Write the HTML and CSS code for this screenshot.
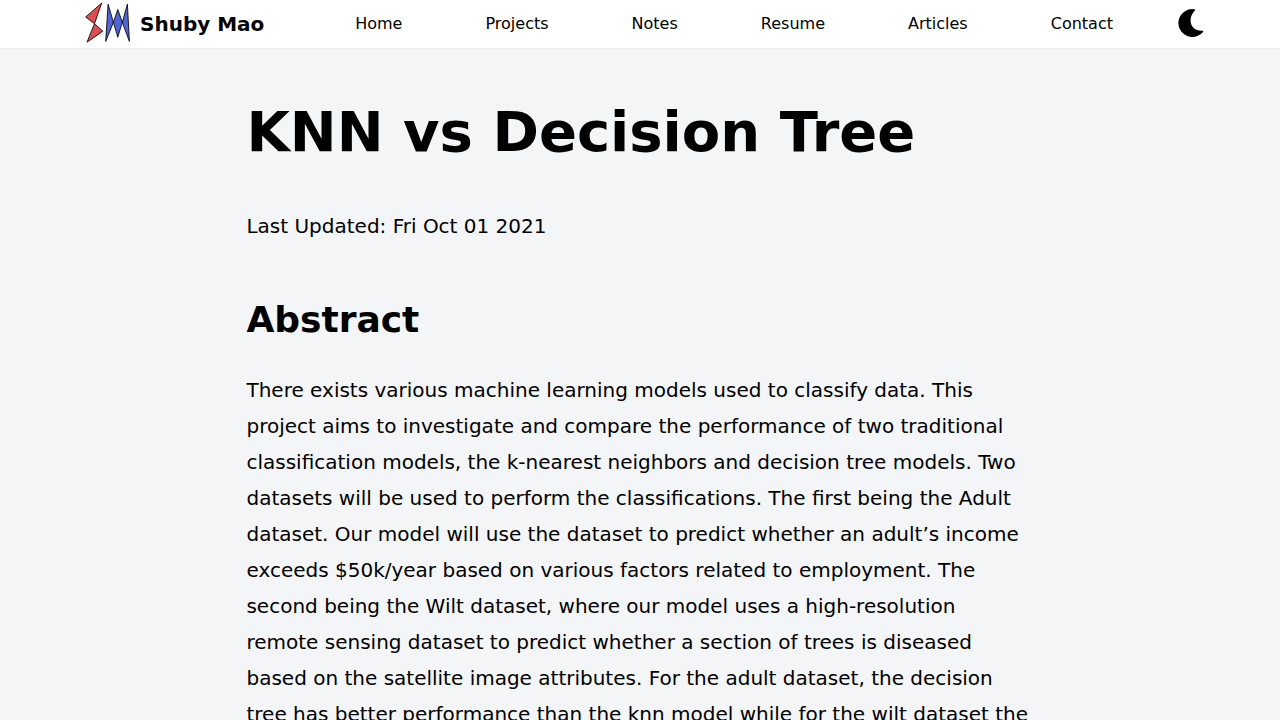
FILE: index.html
```html
<!DOCTYPE html>
<html lang="en">
<head>
<meta charset="utf-8">
<title>KNN vs Decision Tree</title>
<link rel="stylesheet" href="styles.css">
</head>
<body>
<header class="navbar">
  <a class="brand">
    <svg class="logo" width="48" height="44" viewBox="0 0 48 44" stroke="#000" stroke-width=".85" stroke-linejoin="round">
      <path fill="#db4f52" d="M17.7 3 1.7 17l8.800 6.700zM10.500 23.700 18.800 31.200 3 42.200z"/>
      <path fill="#5064d8" d="M24.100 4.200 21.700 41.400 29.400 22.300zM33.800 9.500 38.300 22.300 33.800 37.200 29.400 22.300zM43.400 4.200 45.400 41.400 38.300 22.300z"/>
    </svg>
    <span class="brand-name">Shuby Mao</span>
  </a>
  <nav class="links">
    <a>Home</a><a>Projects</a><a>Notes</a><a>Resume</a><a>Articles</a><a>Contact</a>
  </nav>
  <svg class="moon" width="26" height="28" viewBox="0 0 26 28"><path d="M16.300.2C17.200.3 17.600.9 17 1.500 8.900 9.500 12.200 22.300 24.600 21.700 25.300 21.700 25.600 22.300 25.100 23A14 14 0 1 1 14 0Q15.200 0 16.300.2z"/></svg>
</header>
<main class="article">
  <h1>KNN vs Decision Tree</h1>
  <p>Last Updated: Fri Oct 01 2021</p>
  <h2>Abstract</h2>
  <p>There exists various machine learning models used to classify data. This project aims to investigate and compare the performance of two traditional classification models, the k-nearest neighbors and decision tree models. Two datasets will be used to perform the classifications. The first being the Adult dataset. Our model will use the dataset to predict whether an adult’s income exceeds $50k/year based on various factors related to employment. The second being the Wilt dataset, where our model uses a high-resolution remote sensing dataset to predict whether a section of trees is diseased based on the satellite image attributes. For the adult dataset, the decision tree has better performance than the knn model while for the wilt dataset the</p>
</main>
</body>
</html>
```
FILE: styles.css
```css
* { box-sizing: border-box; }
body {
  margin: 0;
  height: 100vh;
  overflow: hidden;
  background: #f4f5f7;
  color: #000;
  font-family: "DejaVu Sans", sans-serif;
}
.navbar {
  display: flex;
  align-items: center;
  height: 48px;
  padding-left: 84px;
  background: #fff;
  box-shadow: 0 1px 2px rgba(0, 0, 0, 0.05);
}
.brand { display: flex; align-items: center; width: 271.2px; }
.logo { display: block; flex: none; margin-top: -4px; }
.brand-name { margin-left: 8px; font-size: 20px; font-weight: 700; line-height: 28px; }
.links {
  display: flex;
  justify-content: space-between;
  width: 757.8px;
  font-size: 16px;
  line-height: 24px;
}
.moon { display: block; margin: -2px 0 0 64.8px; }
.article {
  width: 65ch;
  margin: 0 auto;
  padding: 56px 20px 0;
  font-size: 20px;
  line-height: 36px;
}
.article h1 { margin: 0 0 48px; font-size: 56px; line-height: 56px; font-weight: 800; }
.article h2 { margin: 56px 0 32px; font-size: 36px; line-height: 40px; font-weight: 700; }
.article p { margin: 0; }
```
